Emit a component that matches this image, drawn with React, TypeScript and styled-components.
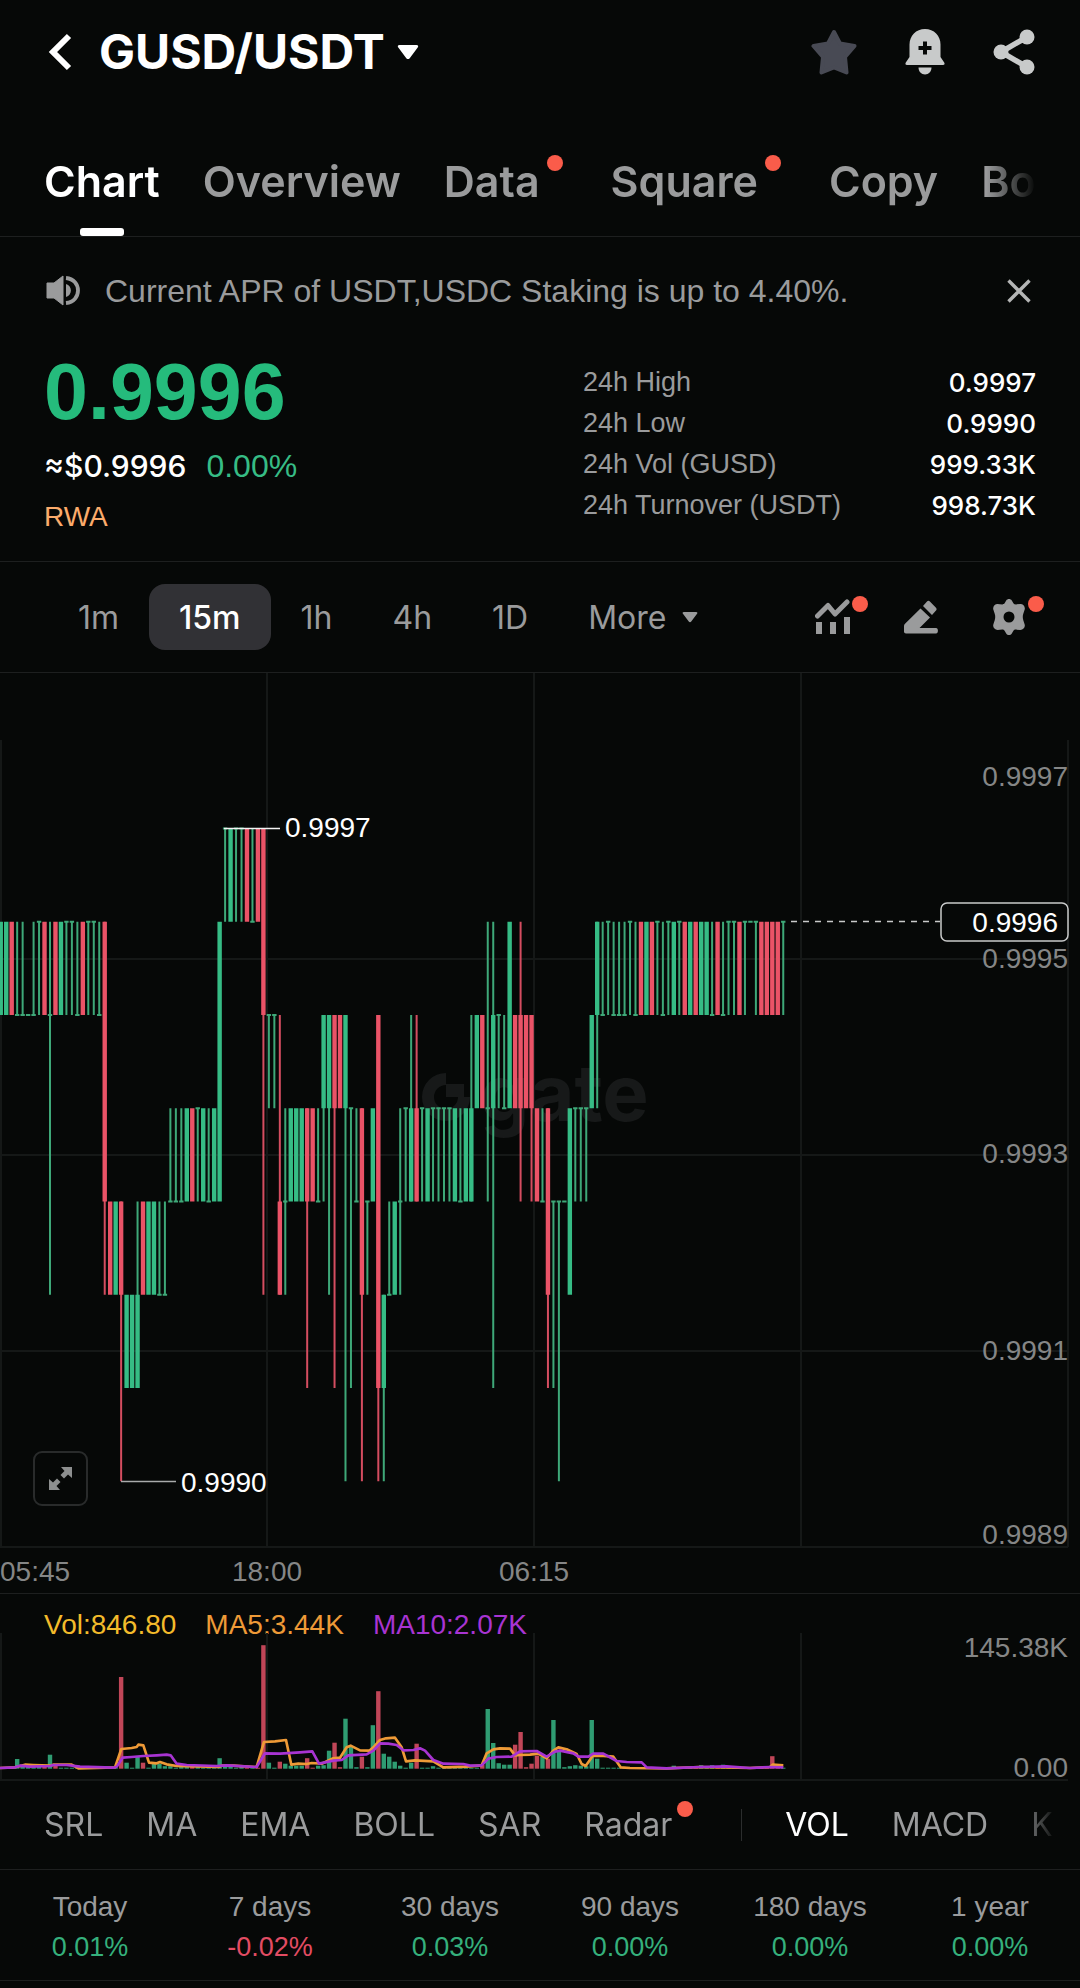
import React from "react";
import styled, { createGlobalStyle } from "styled-components";

const c = {
  bg: "#060807",
  line: "#1d1f1f",
  grid: "#151817",
  text: "#9a9b9c",
  axis: "#858686",
  white: "#ffffff",
  green: "#36bc85",
  thinGreen: "#3ea878",
  red: "#ea5367",
  dot: "#fa5c4a",
};

const BODY_FONT = '"Liberation Sans", Arial, sans-serif';
const HEAD_FONT = 'Inter, "Liberation Sans", sans-serif';

const GlobalStyle = createGlobalStyle`
  * { box-sizing: border-box; }
  body { margin: 0; background: ${c.bg}; }
  button { appearance: none; background: none; border: 0; padding: 0; margin: 0; font: inherit; color: inherit; cursor: pointer; }
  svg { display: block; }
`;

const Page = styled.main`
  width: 100%;
  min-height: 100vh;
  background: ${c.bg};
  color: ${c.text};
  font-family: ${BODY_FONT};
  overflow: hidden;
`;

const Header = styled.header`
  display: flex;
  align-items: center;
  justify-content: space-between;
  height: 104px;
  padding: 0 45px 0 44px;
`;

const HeaderGroup = styled.div<{ $gap: number }>`
  display: flex;
  align-items: center;
  gap: ${(p) => p.$gap}px;
`;

const IconButton = styled.button`
  display: flex;
  align-items: center;
  justify-content: center;
  flex: none;
`;

const PairButton = styled.button`
  display: flex;
  align-items: center;
  gap: 12px;
`;

const Pair = styled.h1`
  margin: 0;
  font: 700 48px/60px ${HEAD_FONT};
  color: ${c.white};
`;

const Tabs = styled.nav`
  display: flex;
  gap: 43px;
  height: 132px;
  padding: 50px 0 0;
  margin: 0 44px;
  overflow: hidden;
  mask-image: linear-gradient(to right, #000 calc(100% - 50px), transparent 100%);
`;

const TabsBar = styled.div`
  border-bottom: 1px solid ${c.line};
`;

const Tab = styled.button<{ $active?: boolean }>`
  display: flex;
  flex: none;
  flex-direction: column;
  align-items: center;
  justify-content: space-between;
  height: 82px;
  font: 600 43px/54px ${HEAD_FONT};
  color: ${(p) => (p.$active ? c.white : c.text)};

  &::after {
    content: "";
    width: 44px;
    height: 8px;
    border-radius: 3px;
    background: ${(p) => (p.$active ? c.white : "transparent")};
  }
`;

const Dotted = styled.span<{ $room: number }>`
  position: relative;
  padding-right: ${(p) => p.$room}px;
`;

const Dot = styled.i<{ $top: number }>`
  position: absolute;
  top: ${(p) => p.$top}px;
  right: 5px;
  width: 16px;
  height: 16px;
  border-radius: 50%;
  background: ${c.dot};
`;

const Notice = styled.div`
  display: flex;
  align-items: center;
  gap: 24px;
  height: 108px;
  padding: 0 48px 0 45px;
  font-size: 32px;
  line-height: 40px;
`;

const NoticeText = styled.p`
  flex: 1;
  margin: 0;
  white-space: nowrap;
`;

const Summary = styled.section`
  display: flex;
  justify-content: space-between;
  padding: 15px 44px 0;
  height: 217px;
  border-bottom: 1px solid ${c.line};
`;

const PriceColumn = styled.div`
  display: flex;
  flex-direction: column;
`;

const Price = styled.strong`
  font: 700 79px/64px ${BODY_FONT};
  color: #25bb7c;
`;

const Approx = styled.div`
  display: flex;
  gap: 20px;
  margin-top: 20px;
  font-size: 32px;
  line-height: 44px;
  color: ${c.green};
`;

const Fiat = styled.span`
  font: 500 30px/44px ${HEAD_FONT};
  color: ${c.white};
`;

const Tag = styled.span`
  margin-top: 12px;
  font-size: 28px;
  line-height: 34px;
  color: #fbab6b;
`;

const Stats = styled.dl`
  display: grid;
  grid-template-columns: auto auto;
  justify-content: space-between;
  grid-auto-rows: 41px;
  width: 453px;
  margin: 0;
  padding-top: 2px;
  font-size: 27px;
  line-height: 41px;

  dt, dd { margin: 0; }
  dd {
    text-align: right;
    font-family: ${HEAD_FONT};
    font-size: 26px;
    font-weight: 500;
    color: ${c.white};
  }
`;

const Toolbar = styled.div`
  display: flex;
  align-items: center;
  justify-content: space-between;
  height: 111px;
  padding: 0 53px 0 48px;
  border-bottom: 1px solid ${c.line};
`;

const Intervals = styled.div`
  display: flex;
`;

const Interval = styled.button<{ $active?: boolean }>`
  display: flex;
  align-items: center;
  gap: 16px;
  height: 66px;
  padding: 0 30px;
  border-radius: 16px;
  font-family: ${HEAD_FONT};
  font-size: 32px;
  font-weight: ${(p) => (p.$active ? 500 : 400)};
  background: ${(p) => (p.$active ? "#313135" : "transparent")};
  color: ${(p) => (p.$active ? c.white : c.text)};
`;

const Tools = styled.div`
  display: flex;
  align-items: center;
  gap: 52px;
`;

const Tool = styled(IconButton)`
  position: relative;
  width: 36px;
  height: 36px;
`;

const ToolDot = styled.i`
  position: absolute;
  top: -3px;
  right: -17px;
  width: 16px;
  height: 16px;
  border-radius: 50%;
  background: ${c.dot};
`;

const ChartPanel = styled.section`
  position: relative;
  border-bottom: 1px solid ${c.line};

  svg { width: 100%; height: auto; }
`;

const ExpandButton = styled.button`
  position: absolute;
  left: 33px;
  bottom: 87px;
  display: flex;
  align-items: center;
  justify-content: center;
  width: 55px;
  height: 55px;
  border: 2px solid #292b2b;
  border-radius: 9px;
  background: ${c.bg};

  svg { width: 27px; height: 27px; }
`;

const VolumePanel = styled.section`
  svg { width: 100%; height: auto; overflow: visible; }
`;

const Legend = styled.div`
  display: flex;
  gap: 29px;
  height: 39px;
  padding: 13px 44px 0;
  font-size: 28px;
  line-height: 36px;
`;

const LegendItem = styled.span<{ $color: string }>`
  color: ${(p) => p.$color};
`;

const IndicatorBar = styled.div`
  border-bottom: 1px solid ${c.line};
`;

const Indicators = styled.div`
  display: flex;
  align-items: center;
  gap: 43px;
  height: 88px;
  margin: 0 24px 0 44px;
  overflow: hidden;
  mask-image: linear-gradient(to right, #000 calc(100% - 36px), transparent 100%);
`;

const Indicator = styled.button<{ $active?: boolean }>`
  flex: none;
  font-family: ${HEAD_FONT};
  font-size: 32px;
  line-height: 56px;
  color: ${(p) => (p.$active ? c.white : c.text)};
`;

const Divider = styled.span`
  flex: none;
  width: 1px;
  height: 32px;
  background: #2b2d2d;
`;

const Returns = styled.div`
  display: grid;
  grid-template-columns: repeat(6, 1fr);
  height: 111px;
  padding-top: 16px;
  border-bottom: 1px solid ${c.line};
  font-size: 28px;
  line-height: 41px;
  text-align: center;
`;

const ReturnCell = styled.div`
  display: flex;
  flex-direction: column;
`;

const Change = styled.span<{ $down?: boolean }>`
  font-size: 27px;
  color: ${(p) => (p.$down ? "#e24c63" : "#35b07c")};
`;

/* ---------- icons ---------- */

const BackIcon = () => (
  <svg width="34" height="42" viewBox="0 0 34 42" fill="none">
    <path d="M25 5 9 21l16 16" stroke="#fff" strokeWidth="6" />
  </svg>
);

const Caret = ({ w, color }: { w: number; color: string }) => (
  <svg width={w} height={w} viewBox="0 0 22 22">
    <path d="M2.5 4h17c1.6 0 2.2 1.4 1.2 2.6l-8 10.6c-.9 1.2-2.5 1.2-3.4 0l-8-10.6C.3 5.4.9 4 2.5 4Z" fill={color} />
  </svg>
);

const StarIcon = () => (
  <svg width="46" height="46" viewBox="0 0 46 46">
    <path
      d="M23 3l6 11.5L43.5 17 34 28l1.5 15.5L23 38.5l-12.5 5L12 28 2.500 17 17 14.500Z"
      fill="#484a54" stroke="#484a54" strokeWidth="4" strokeLinejoin="round"
    />
  </svg>
);

const BellIcon = () => (
  <svg width="40" height="46" viewBox="0 0 40 46">
    <path d="M20 0C11 0 4.500 6.800 4.500 15.500V28L.8 33.500C0 35 .4 36 2 36h36c1.600 0 2-1 1.200-2.500L35.500 28V15.500C35.500 6.800 29 0 20 0Z" fill="#c8caca" />
    <path d="M13.500 38.500h13c0 4-2.800 7-6.500 7s-6.500-3-6.500-7Z" fill="#c8caca" />
    <path d="M20 12.500v13M13.500 19h13" stroke={c.bg} strokeWidth="4" />
  </svg>
);

const ShareIcon = () => (
  <svg width="42" height="46" viewBox="0 0 42 46">
    <path d="M34 8 8 23l26 15" fill="none" stroke="#c8caca" strokeWidth="5.5" />
    <circle cx="34" cy="8" r="7.5" fill="#c8caca" />
    <circle cx="8" cy="23" r="7.5" fill="#c8caca" />
    <circle cx="34" cy="38" r="7.5" fill="#c8caca" />
  </svg>
);

const SpeakerIcon = () => (
  <svg width="36" height="32" viewBox="0 0 36 32">
    <path d="M2 8h7L18 1v29l-9-7H2Z" fill={c.text} stroke={c.text} strokeLinejoin="round" />
    <path d="M21 9c6.500 1.500 6.500 11.500 0 13Z" fill={c.text} />
    <path d="M21 3c16 1.500 16 23.500 0 25" fill="none" stroke={c.text} strokeWidth="3.8" />
  </svg>
);

const CloseIcon = () => (
  <svg width="26" height="26" viewBox="0 0 26 26">
    <path d="M2.500 2.500l21 21M23.500 2.500l-21 21" stroke="#b4b5b5" strokeWidth="3.4" />
  </svg>
);

const IndicatorIcon = () => (
  <svg width="36" height="36" viewBox="0 0 36 36" stroke={c.text} fill="none" strokeLinejoin="round">
    <path d="M2.500 17 13 6.500l7 8.500L32 3" strokeWidth="5" strokeLinecap="round" />
    <path d="M4 23v12M18 23v12M32 18v17" strokeWidth="6" />
  </svg>
);

const PencilIcon = () => (
  <svg width="36" height="36" viewBox="0 0 36 36" fill={c.text}>
    <path d="M17.500 9.500l9.500 9L16.500 29H33c2.600 0 2.600 5.500 0 5.500H3c-1.200 0-2-.8-2-2V27c0-1 .3-1.600 1-2.300Z" />
    <path d="M20 7l4-4.500c.8-.9 2-.9 2.900 0L33 8.700c.8.800.8 2 0 2.800L29 16Z" />
  </svg>
);

const GearIcon = () => (
  <svg width="36" height="38" viewBox="0 0 36 38">
    <path
      fillRule="evenodd" fill={c.text}
      d="M15.200 2.500c1.300-2 4.300-2 5.600 0l1.600 2.700c.5.800 1.400 1.200 2.300 1.200l4.700-.4c3 0 5.200 3 4.200 5.800l-1.300 4c-.7 2.200-.7 4.200 0 6.400l1.300 4c1 2.800-1.200 5.800-4.200 5.800l-4.700-.4c-.9 0-1.800.4-2.300 1.200l-1.600 2.700c-1.300 2-4.300 2-5.600 0l-1.600-2.700c-.5-.8-1.400-1.200-2.300-1.200l-4.700.4c-3 0-5.200-3-4.200-5.800l1.300-4c.7-2.200.7-4.200 0-6.400l-1.300-4C1.400 9 3.600 6 6.600 6l4.700.4c.9 0 1.800-.4 2.300-1.200ZM18 13.500a5.500 5.500 0 1 0 0 11 5.500 5.500 0 0 0 0-11Z"
    />
  </svg>
);

const ExpandIcon = () => (
  <svg viewBox="0 0 27 27" fill="#8d8f8f">
    <path d="M14 2h11v11l-4-3.500-4 4L13.500 10l4-4Z" />
    <path d="M13 25H2V14l4 3.500 4-4 3.500 3.500-4 4Z" />
  </svg>
);

/* ---------- candles ---------- */

const X0 = 0.75;
const STEP = 5.472;
const xAt = (i: number) => X0 + i * STEP;
// Price ticks "A" (0.9997) to "H" (0.9990), one row each.
const yAt = (tick: string) => 155.5 + 93.25 * (tick.charCodeAt(0) - 65);

// colour, body (one letter when open equals close), optional wick
const CANDLES = `
gBC gBC rBC gC:BC gC:BC gC gC:BC gB:BC rBC gC:BF rBC gBC gB:BC gB:BC gC:BC rBC gB:BC gB:BC gC:BC rBE:BF
rEF gEF rEF:EH gFG gFG gFG:EG rEF gEF gEF gF:EF gF:EF gE:DE gE:DE gE:DE gDE rDE gD:DE gDE gE:DE gDE
gBE gA:AB gAB gA:AB gA:AB rAB gB:AB rAB rAC:AF gC:CD gC:CD rEF:CF gE:DF gDE gDE gDE rDE:DG rDE gE:DE gCD:CE
gCD:CF rCD:CG rCD gCD:CH gD:DG gE:DE rDF:DH gE:EF gDE rCG:CH gFG:FH gF:EF gEF gE:DF gD:DE gDE:CE rDE:CE gD:DE gDE gD:DE
gD:DE gD:DE gD:DE gDE gE:DE gDE gDE:CE gCD rCD gD:BE gCD:BG gC:CD gD:CD gBD rCD rCD:BE rCD rCD:CE rDE gE:DE
rDF:DG gE:EG gE:EH gE gDF gD:DE gD:DE gD:DE gCD gBC:BD gC:BC gB:BC gC:BC gC:BC gC:BC gB:BC gC:BC rBC gBC rBC
gB:BC gC:BC gB:BC gBC gB:BC rBC gBC rBC gBC gBC gC:BC rBC gC:BC gB:BC gB:BC rBC gB:BC gB gB:BC rBC
rBC rBC rBC gB:BC`
  .trim()
  .split(/\s+/)
  .map((s) => {
    const [main, wick] = s.split(":");
    const body = main.slice(1);
    return { up: main[0] === "g", body, wick: wick ?? body };
  });

const Candle = ({ i }: { i: number }) => {
  const { up, body, wick } = CANDLES[i];
  const x = xAt(i);
  const top = yAt(body[0]);
  const flat = body.length === 1;
  return (
    <g>
      {wick.length > 1 && wick !== body && (
        <rect x={x - 1} width="2" y={yAt(wick[0])} height={yAt(wick[1]) - yAt(wick[0])} fill={up ? c.thinGreen : "#d44d60"} />
      )}
      {flat ? (
        <rect x={x - 2.2} width="4.4" y={top - 1} height="2" fill={c.thinGreen} />
      ) : (
        <rect x={x - 2.2} width="4.4" y={top} height={yAt(body[1]) - top} fill={up ? c.green : c.red} />
      )}
    </g>
  );
};

const COLUMNS = [1, 267, 534, 801];
const PRICES: [string, number][] = [
  ["0.9997", 103],
  ["0.9995", 285],
  ["0.9993", 480],
  ["0.9991", 677],
  ["0.9989", 861],
];

const PriceChart = () => (
  <svg viewBox="0 0 1080 920" fontFamily={BODY_FONT} fontSize="28">
    <g stroke={c.grid} strokeWidth="2">
      {COLUMNS.map((x) => (
        <path key={x} d={`M${x} ${x === 1 ? 67 : 0}V874`} />
      ))}
      <path d="M1068 67V874" />
      {[286, 482, 678, 874].map((y) => (
        <path key={y} d={`M0 ${y}H1068`} />
      ))}
    </g>
    <g fill="#171919">
      <path d="M446 400a24 24 0 1 0 24 24h-12a12 12 0 1 1-12-12Z" />
      <path d="M446 411h18v13h-18Z" />
      <text x="480" y="448" fontFamily={HEAD_FONT} fontSize="78" fontWeight="700">gate</text>
    </g>
    {CANDLES.map((_, i) => (
      <Candle key={i} i={i} />
    ))}
    <path d="M224 155.500H280" stroke="#f4f4f4" strokeWidth="1.5" />
    <path d="M121 808.500H176" stroke="#a9abab" strokeWidth="1.5" />
    <path d="M791 248.500H940" stroke="#c9caca" strokeWidth="1.5" strokeDasharray="6 6" />
    <g fill={c.axis} textAnchor="end">
      {PRICES.map(([t, y]) => (
        <text key={t} x="1068" y={y + 10}>{t}</text>
      ))}
    </g>
    <rect x="941" y="230" width="127" height="38" rx="6" fill={c.bg} stroke="#c9caca" strokeWidth="1.5" />
    <g fill={c.white}>
      <text x="1058" y="259" textAnchor="end">0.9996</text>
      <text x="285" y="164">0.9997</text>
      <text x="181" y="819">0.9990</text>
    </g>
    <g fill={c.axis} textAnchor="middle">
      <text x="0" y="908" textAnchor="start">05:45</text>
      <text x="267" y="908">18:00</text>
      <text x="534" y="908">06:15</text>
    </g>
  </svg>
);

/* ---------- volume ---------- */

const VOLUMES: Record<number, number> = {
  3: 9.7, 4: 2, 5: 3, 6: 3, 7: 3, 8: 2, 9: 14, 10: 3, 22: 91.7, 23: 6, 25: 12, 26: 6, 27: 1, 28: 5, 29: 5, 30: 2.5, 31: 2.5,
  33: 2, 34: 2, 35: 3, 36: 2, 38: 2, 39: 2, 40: 10.5, 41: 3, 42: 2, 44: 2, 48: 123.5, 49: 6, 51: 7, 52: 5, 53: 3, 54: 3, 55: 3,
  56: 10.5, 58: 3, 59: 3.5, 60: 18, 61: 26, 62: 1.5, 63: 50, 64: 22, 65: 1.5, 66: 12, 67: 1.5, 68: 43.5, 69: 77.5, 70: 15,
  71: 12, 72: 7, 73: 3, 75: 6, 76: 25, 79: 2.5, 88: 4, 89: 59.7, 90: 25.7, 91: 5.5, 92: 4, 93: 4, 94: 24, 95: 36.7, 96: 1.5,
  97: 5, 98: 13, 99: 12, 100: 10, 101: 48.7, 102: 18, 103: 1.5, 104: 2.5, 105: 3.5, 106: 3, 107: 2.5, 108: 48.7, 109: 10,
  123: 3, 128: 3.5, 130: 3.5, 132: 4, 141: 12.5, 142: 3,
};

// Moving averages, sampled on a grid three times finer than the panel.
const MA5 =
  "0,405 45,403 75,395 100,396 150,398 160,395 215,395 235,406 345,403 364,348 395,345 410,342 415,335 430,337 447,389 470,391 480,387 500,394 530,399 655,402 665,398 700,398 770,402 792,327 825,325 858,321 874,395 895,392 920,393 935,390 965,392 1000,376 1020,374 1040,343 1052,338 1080,352 1108,353 1120,343 1140,321 1158,316 1185,314 1205,343 1218,385 1245,382 1300,385 1330,403 1400,401 1445,397 1460,361 1480,349 1500,346 1530,347 1545,367 1560,366 1590,365 1615,362 1640,376 1660,353 1675,343 1700,349 1730,363 1745,393 1757,399 1778,369 1800,368 1840,371 1862,403 1890,405 2000,406 2100,402 2250,405 2310,402 2318,395 2350,397";
const MA10 =
  "0,405 45,403 60,398 90,401 150,399 160,396 200,396 240,401 340,404 350,401 368,374 395,372 430,369 470,367 500,365 512,367 530,392 560,396 650,399 680,397 770,402 795,361 840,362 900,358 937,355 957,392 1000,383 1025,381 1045,367 1100,364 1120,353 1140,331 1165,332 1190,336 1210,352 1240,351 1260,346 1275,353 1300,381 1330,392 1390,393 1410,398 1445,397 1465,377 1490,372 1535,371 1560,355 1610,354 1640,371 1665,356 1680,353 1720,361 1735,371 1765,371 1780,362 1810,362 1850,384 1880,387 1925,388 1940,403 2000,406 2100,402 2180,400 2250,405 2310,402 2350,403";

const VolumeChart = () => (
  <svg viewBox="0 0 1080 148" fontFamily={BODY_FONT} fontSize="28">
    <g stroke={c.grid} strokeWidth="2">
      {COLUMNS.map((x) => (
        <path key={x} d={`M${x} 0V147`} />
      ))}
      <path d="M0 147H1068" />
    </g>
    {CANDLES.map((k, i) => {
      const h = VOLUMES[i] ?? 1;
      return <rect key={i} x={xAt(i) - 2.2} width="4.4" y={135.7 - h} height={h} fill={k.up ? "#2f9c72" : "#c04658"} />;
    })}
    <g transform="scale(0.33333)" fill="none" strokeWidth="8" strokeLinejoin="round">
      <polyline points={MA5} stroke="#ee9a37" />
      <polyline points={MA10} stroke="#a834d2" />
    </g>
    <g fill={c.axis} textAnchor="end">
      <text x="1068" y="24">145.38K</text>
      <text x="1068" y="144">0.00</text>
    </g>
  </svg>
);

/* ---------- page ---------- */

const TABS = [
  { label: "Chart", active: true },
  { label: "Overview" },
  { label: "Data", dot: true },
  { label: "Square", dot: true },
  { label: "Copy" },
  { label: "Bo" },
];

const STATS = [
  ["24h High", "0.9997"],
  ["24h Low", "0.9990"],
  ["24h Vol (GUSD)", "999.33K"],
  ["24h Turnover (USDT)", "998.73K"],
];

const RETURNS = [
  ["Today", "0.01%"],
  ["7 days", "-0.02%"],
  ["30 days", "0.03%"],
  ["90 days", "0.00%"],
  ["180 days", "0.00%"],
  ["1 year", "0.00%"],
];

export default function App() {
  return (
    <Page>
      <GlobalStyle />
      <Header>
        <HeaderGroup $gap={21}>
          <IconButton aria-label="Back"><BackIcon /></IconButton>
          <PairButton>
            <Pair>GUSD/USDT</Pair>
            <Caret w={22} color="#fff" />
          </PairButton>
        </HeaderGroup>
        <HeaderGroup $gap={48}>
          <IconButton aria-label="Favourite"><StarIcon /></IconButton>
          <IconButton aria-label="Price alert"><BellIcon /></IconButton>
          <IconButton aria-label="Share"><ShareIcon /></IconButton>
        </HeaderGroup>
      </Header>

      <TabsBar>
        <Tabs>
          {TABS.map((t) => (
            <Tab key={t.label} $active={t.active}>
              {t.dot ? (
                <Dotted $room={28}>{t.label}<Dot $top={1} /></Dotted>
              ) : (
                <span>{t.label}</span>
              )}
            </Tab>
          ))}
        </Tabs>
      </TabsBar>

      <Notice>
        <SpeakerIcon />
        <NoticeText>Current APR of USDT,USDC Staking is up to 4.40%.</NoticeText>
        <IconButton aria-label="Close"><CloseIcon /></IconButton>
      </Notice>

      <Summary>
        <PriceColumn>
          <Price>0.9996</Price>
          <Approx>
            <Fiat>≈$0.9996</Fiat>
            <span>0.00%</span>
          </Approx>
          <Tag>RWA</Tag>
        </PriceColumn>
        <Stats>
          {STATS.map(([k, v]) => (
            <React.Fragment key={k}>
              <dt>{k}</dt>
              <dd>{v}</dd>
            </React.Fragment>
          ))}
        </Stats>
      </Summary>

      <Toolbar>
        <Intervals>
          <Interval>1m</Interval>
          <Interval $active>15m</Interval>
          <Interval>1h</Interval>
          <Interval>4h</Interval>
          <Interval>1D</Interval>
          <Interval>More <Caret w={16} color={c.text} /></Interval>
        </Intervals>
        <Tools>
          <Tool aria-label="Indicators"><IndicatorIcon /><ToolDot /></Tool>
          <Tool aria-label="Draw"><PencilIcon /></Tool>
          <Tool aria-label="Settings"><GearIcon /><ToolDot /></Tool>
        </Tools>
      </Toolbar>

      <ChartPanel>
        <PriceChart />
        <ExpandButton aria-label="Full screen"><ExpandIcon /></ExpandButton>
      </ChartPanel>

      <VolumePanel>
        <Legend>
          <LegendItem $color="#f3bb2b">Vol:846.80</LegendItem>
          <LegendItem $color="#ee9a37">MA5:3.44K</LegendItem>
          <LegendItem $color="#a834d2">MA10:2.07K</LegendItem>
        </Legend>
        <VolumeChart />
      </VolumePanel>

      <IndicatorBar>
        <Indicators>
          <Indicator>SRL</Indicator>
          <Indicator>MA</Indicator>
          <Indicator>EMA</Indicator>
          <Indicator>BOLL</Indicator>
          <Indicator>SAR</Indicator>
          <Indicator><Dotted $room={26}>Radar<Dot $top={-4} /></Dotted></Indicator>
          <Divider />
          <Indicator $active>VOL</Indicator>
          <Indicator>MACD</Indicator>
          <Indicator>KDJ</Indicator>
        </Indicators>
      </IndicatorBar>

      <Returns>
        {RETURNS.map(([k, v]) => (
          <ReturnCell key={k}>
            <span>{k}</span>
            <Change $down={v.startsWith("-")}>{v}</Change>
          </ReturnCell>
        ))}
      </Returns>
    </Page>
  );
}
